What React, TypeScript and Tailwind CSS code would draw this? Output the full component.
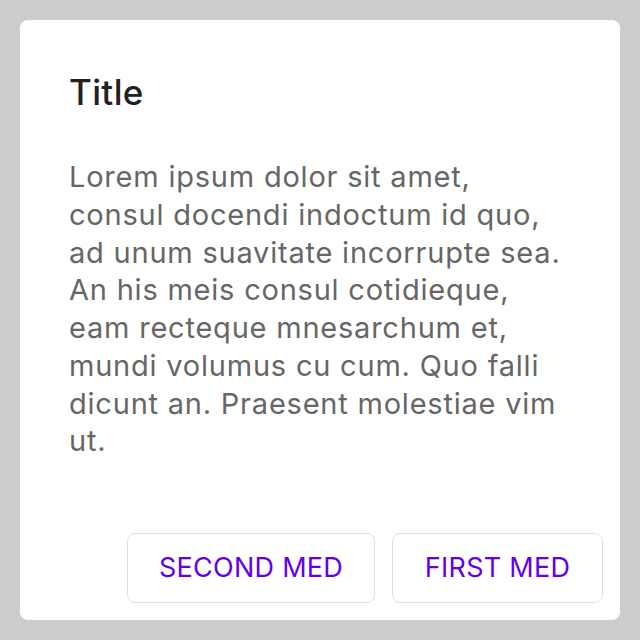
import React from "react";

export default function App() {
  return (
    <div
      className="w-[640px] h-[640px] bg-[#cccccc] p-5"
      style={{ fontFamily: "Inter, 'Noto Sans', sans-serif" }}
    >
      <div className="w-full h-full bg-white rounded-[8px] flex flex-col">
        <div className="pl-[49px] pr-[48px] pt-[50px]">
          <h1 className="text-[35px] leading-[44px] tracking-[0.01em] text-[#212121] font-medium">Title</h1>
          <p className="mt-[44px] max-w-[498px] text-[29px] leading-[37.75px] tracking-[0.027em] text-[#666666]">
            Lorem ipsum dolor sit amet, consul docendi indoctum id quo, ad unum suavitate incorrupte sea. An his meis consul cotidieque, eam recteque mnesarchum et, mundi volumus cu cum. Quo falli dicunt an. Praesent molestiae vim ut.
          </p>
        </div>
        <div className="mt-auto flex justify-end gap-[17px] pr-[17px] pb-[17px]">
          <button className="h-[70px] w-[248px] rounded-[8px] border-[1.5px] border-[#e0e0e0] text-[27px] tracking-[0.01em] text-[#6200ee]">
            SECOND MED
          </button>
          <button className="h-[70px] w-[211px] rounded-[8px] border-[1.5px] border-[#e0e0e0] text-[27px] tracking-[0.01em] text-[#6200ee]">
            FIRST MED
          </button>
        </div>
      </div>
    </div>
  );
}
